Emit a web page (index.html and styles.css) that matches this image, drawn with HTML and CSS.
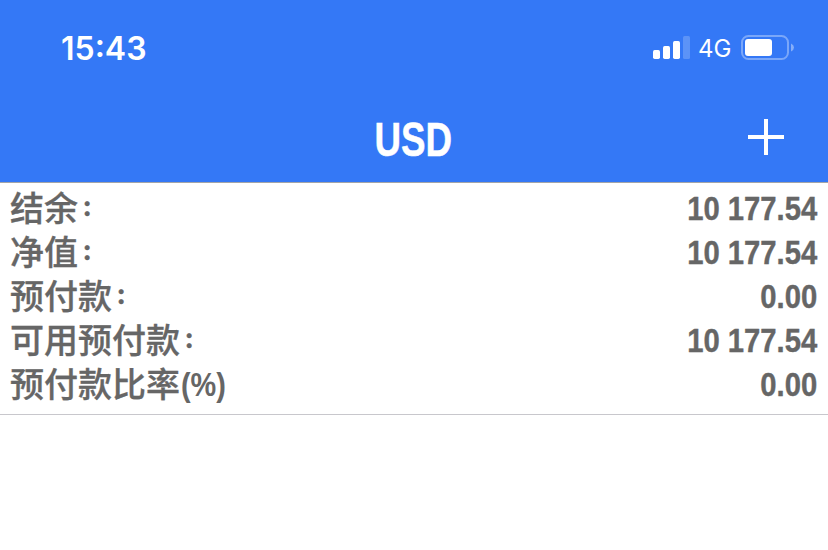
FILE: index.html
```html
<!DOCTYPE html>
<html lang="zh-CN">
<head>
<meta charset="utf-8">
<title>USD</title>
<link rel="stylesheet" href="styles.css">
</head>
<body>
<header class="header">
  <div class="status">
    <span class="time">15:43</span>
    <div class="indicators">
      <svg class="signal" width="37" height="24" viewBox="0 0 37 24"><g fill="#fff"><rect y="14" width="7" height="9" rx="1.7"/><rect x="10" y="10" width="7" height="13" rx="1.7"/><rect x="20" y="5" width="7" height="18" rx="1.7"/><rect x="30" y="0" width="7" height="23" rx="1.5" opacity=".2"/></g></svg>
      <span class="network">4G</span>
      <svg class="battery" width="53" height="26" viewBox="0 0 53 26"><rect x="1" y="1" width="46" height="23" rx="6.500" fill="none" stroke="#fff" stroke-opacity=".35" stroke-width="2"/><rect x="4" y="4" width="27" height="17" rx="3" fill="#fff"/><path d="M50 8.500q3 1.500 3 4t-3 4z" fill="#fff" opacity=".4"/></svg>
    </div>
  </div>
  <div class="navbar">
    <h1 class="title"><span class="narrow">USD</span></h1>
    <svg class="plus" width="36" height="36" viewBox="0 0 36 36"><path d="M18 0v36M0 18h36" stroke="#fff" stroke-width="4"/></svg>
  </div>
</header>
<main class="summary">
  <div class="row"><span class="label">结余<span class="colon">:</span></span><span class="value">10 177.54</span></div>
  <div class="row"><span class="label">净值<span class="colon">:</span></span><span class="value">10 177.54</span></div>
  <div class="row"><span class="label">预付款<span class="colon">:</span></span><span class="value">0.00</span></div>
  <div class="row"><span class="label">可用预付款<span class="colon">:</span></span><span class="value">10 177.54</span></div>
  <div class="row"><span class="label">预付款比率<span class="unit">(%)</span></span><span class="value">0.00</span></div>
</main>
</body>
</html>
```
FILE: styles.css
```css
* { box-sizing: border-box; }
body { margin: 0; height: 550px; overflow: hidden; background: #fff; font-family: "Liberation Sans", "Noto Sans CJK SC", sans-serif; }
.header { height: 183px; background: #3478f6; color: #fff; border-bottom: 1px solid #a3a5a8; }
.status { height: 96px; padding: 0 34px 0 61px; display: flex; align-items: center; justify-content: space-between; }
.time { margin-top: 1px; font: 600 32px/40px Inter, sans-serif; }
.indicators { display: flex; align-items: center; }
.network { width: 33px; margin: 2px 9px 0 8px; font: 400 24px/28px Inter, sans-serif; }
.battery { margin-left: 1px; }
.signal { margin-right: .5px; }
.navbar { height: 86px; display: grid; grid-template-columns: 1fr auto 1fr; align-items: center; padding: 0 44px; }
.title { grid-column: 2; margin: 0; font-size: 49px; line-height: 52px; }
.narrow { display: inline-block; transform: translateX(-.5px) scaleX(.75); -webkit-text-stroke: .5px #fff; }
.plus { justify-self: end; margin-bottom: 5px; }
.summary { height: 232px; padding: 3px 11px 0 10px; border-bottom: 1px solid #c8c7cc; color: #666; }
.row { height: 44px; display: flex; align-items: center; justify-content: space-between; }
.label { display: flex; height: 44px; font: 500 34px/46px "Liberation Sans", "Noto Sans CJK SC", sans-serif; white-space: nowrap; -webkit-text-stroke: .3px #666; }
.value { font: 700 34px/44px "Liberation Sans", sans-serif; transform: scaleX(.86); transform-origin: right center; white-space: nowrap; -webkit-text-stroke: .4px #666; }
.colon { margin-left: 4.5px; font: 700 28px/40px Inter, sans-serif; }
.unit { margin-left: 1px; font: 700 34px/44px "Liberation Sans", sans-serif; transform: scaleX(.85); transform-origin: left center; -webkit-text-stroke: 0; }
```
